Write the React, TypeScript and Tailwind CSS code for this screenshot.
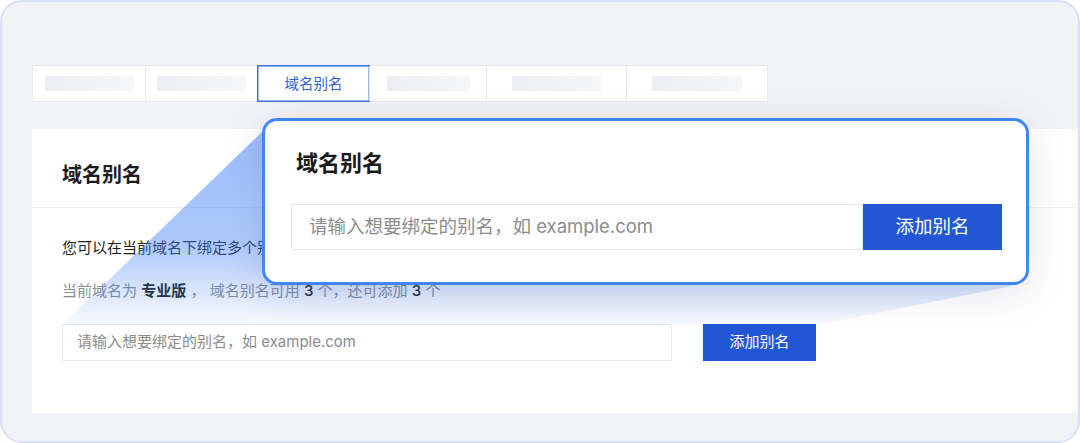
import React from "react";

const tabs = [
  { w: "w-[112px]", bar: "w-[89px]" },
  { w: "w-[112px]", bar: "w-[89px]" },
  { w: "w-[112px]", active: true },
  { w: "w-[117px]", bar: "w-[83px]" },
  { w: "w-[140px]", bar: "w-[89px]" },
  { w: "w-[141px]", bar: "w-[90px]" },
];

const Beam = () => (
  // page coords minus the 2px frame border
  <svg
    className="absolute left-[-2px] top-[-2px] pointer-events-none"
    width="1080"
    height="443"
    viewBox="0 0 1080 443"
  >
    <defs>
      <linearGradient id="beam" x1="0" y1="125" x2="0" y2="325" gradientUnits="userSpaceOnUse">
        <stop offset="0" stopColor="#3d7ff6" stopOpacity="0.52" />
        <stop offset="0.6" stopColor="#3d7ff6" stopOpacity="0.42" />
        <stop offset="0.83" stopColor="#3d7ff6" stopOpacity="0.2" />
        <stop offset="1" stopColor="#3d7ff6" stopOpacity="0.03" />
      </linearGradient>
    </defs>
    <polygon points="264,130 1020,130 1012,286 816,325 62,325" fill="url(#beam)" />
  </svg>
);

const App = () => {
  return (
    <div className="w-[1080px] h-[443px] bg-white font-['Inter','Noto_Sans_CJK_SC',sans-serif]">
      <div className="relative w-[1080px] h-[443px] rounded-[22px] border-2 border-[#d9dffb] bg-[#f2f3f7] overflow-hidden pl-[30px] pt-[63px]">
        {/* Tabs */}
        <div className="flex h-[37px] w-fit bg-white border border-[#e7e9f0]">
          {tabs.map((t, i) => (
            <div
              key={i}
              className={`${t.w} relative flex items-center justify-center ${i > 0 ? "border-l border-[#e7e9f0]" : ""}`}
            >
              {t.active ? (
                <>
                  <div className="absolute -inset-px ring-[1.5px] ring-inset ring-[#3e6fe0]" />
                  <span className="text-[14.5px] text-[#2d5fd8]">域名别名</span>
                </>
              ) : (
                <div className={`${t.bar} h-[15px] bg-gradient-to-r from-[#edeef1] to-[#f6f7f9]`} />
              )}
            </div>
          ))}
        </div>

        {/* Card */}
        <div className="mt-[27px] h-[284px] bg-white">
          <div className="h-[79px] border-b border-[#eef0f4] pl-[30px] pt-[33px]">
            <h2 className="text-[20px] leading-[27px] font-semibold text-[#1d1d1f]">域名别名</h2>
          </div>
          <div className="pl-[30px] pt-[29px]">
            <p className="text-[15px] leading-[22px] text-[#1f1f22] whitespace-nowrap">
              您可以在当前域名下绑定多个别名，通过别名访问时将展示与当前域名相同的内容
            </p>
            <p className="mt-[21px] text-[15px] leading-[22px] text-[#8a8d94] whitespace-nowrap">
              当前域名为 <span className="font-semibold text-[#222]">专业版</span> ， 域名别名可用{" "}
              <span className="font-medium text-[#222]">3</span> 个，还可添加{" "}
              <span className="font-medium text-[#222]">3</span> 个
            </p>
            <div className="mt-[22px] flex">
              <div className="w-[610px] h-[37px] border border-[#e8e9ef] flex items-center pl-[14px] text-[15px] text-[#8c8c8c]">
                请输入想要绑定的别名，如 example.com
              </div>
              <button className="ml-[31px] w-[113px] h-[37px] bg-[#2356d4] text-white text-[15px]">
                添加别名
              </button>
            </div>
          </div>
        </div>

        <Beam />

        {/* Zoomed popup */}
        <div className="absolute left-[260px] top-[116px] w-[767px] h-[167px] rounded-[15px] border-[3px] border-[#3f86f9] bg-white shadow-[0_8px_40px_rgba(30,45,90,0.12)] pl-[26px] pt-[27px]">
          <h3 className="pl-[5px] text-[22px] leading-[30px] font-semibold text-[#1a1a1c]">域名别名</h3>
          <div className="mt-[26px] flex">
            <div className="w-[572px] h-[46px] border border-[#e6e8ee] flex items-center pl-[17px] text-[18.5px] text-[#8c8c8c] whitespace-nowrap">
              请输入想要绑定的别名，如 example.com
            </div>
            <button className="w-[139px] h-[46px] bg-[#2356d4] text-white text-[18.5px]">添加别名</button>
          </div>
        </div>
      </div>
    </div>
  );
};

export default App;
